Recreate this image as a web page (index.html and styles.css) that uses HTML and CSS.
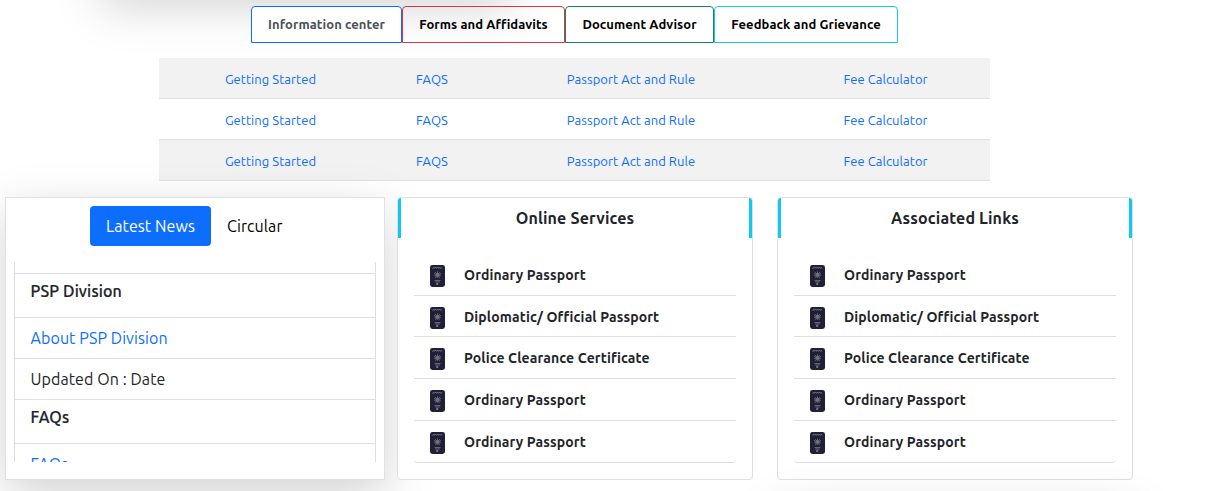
FILE: index.html
```html
<!DOCTYPE html>
<html lang="en">
<head>
<meta charset="utf-8">
<title>Passport Services</title>
<link rel="stylesheet" href="styles.css">
</head>
<body>
<svg class="defs" width="0" height="0" aria-hidden="true">
  <symbol id="passport" viewBox="0 0 15 22">
    <rect width="15" height="22" rx="2.4" fill="#211f38"/>
    <path d="M2.4 3.4h.8V2.4h1v.6h.9v-.5h1v.6h.9v-.6h1v.6h.9v-.6h1v.6h.9v-.5h1v.8" stroke="#77777f" stroke-width=".8" fill="none"/>
    <path d="M4.2 8l2 3M10.8 8l-2 3M7.5 6.3v6.5M5.3 7l1.5 3M9.7 7l-1.5 3M4.2 10.5l2.4 1M10.8 10.5l-2.4 1M5.2 12.8l1.5-1M9.8 12.8l-1.5-1" stroke="#62656c" stroke-width=".9"/>
    <circle cx="7.5" cy="9.8" r="2" fill="#6f7178"/>
    <path d="M4.5 15.6h6M5.3 17h4.4" stroke="#6c6a75" stroke-width="1"/>
    <rect x="6.2" y="18.2" width="2" height="1.6" fill="#85848d"/>
  </symbol>
</svg>
<div class="page">
  <div class="shade shade-top"></div>
  <nav class="tabs">
    <a class="tab tab-info"><span>Information center</span></a>
    <a class="tab tab-forms"><span>Forms and Affidavits</span></a>
    <a class="tab tab-doc"><span>Document Advisor</span></a>
    <a class="tab tab-feed"><span>Feedback and Grievance</span></a>
  </nav>
  <div class="links">
    <div class="link-row"><a>Getting Started</a><a>FAQS</a><a>Passport Act and Rule</a><a>Fee Calculator</a></div>
    <div class="link-row"><a>Getting Started</a><a>FAQS</a><a>Passport Act and Rule</a><a>Fee Calculator</a></div>
    <div class="link-row"><a>Getting Started</a><a>FAQS</a><a>Passport Act and Rule</a><a>Fee Calculator</a></div>
  </div>
  <main class="panels">
    <section class="news">
      <div class="pills"><a class="pill active">Latest News</a><a class="pill circular">Circular</a></div>
      <div class="feed">
        <div class="feed-row stub"></div>
        <div class="feed-row head"><b>PSP Division</b></div>
        <div class="feed-row"><a>About PSP Division</a></div>
        <div class="feed-row"><span>Updated On : Date</span></div>
        <div class="feed-row head"><b>FAQs</b></div>
        <div class="feed-row"><a>FAQs</a></div>
      </div>
    </section>
    <section class="card">
      <h2 class="card-title">Online Services</h2>
      <ul class="list">
        <li><svg class="icon"><use href="#passport"/></svg><span>Ordinary Passport</span></li>
        <li><svg class="icon"><use href="#passport"/></svg><span>Diplomatic/ Official Passport</span></li>
        <li><svg class="icon"><use href="#passport"/></svg><span>Police Clearance Certificate</span></li>
        <li><svg class="icon"><use href="#passport"/></svg><span>Ordinary Passport</span></li>
        <li><svg class="icon"><use href="#passport"/></svg><span>Ordinary Passport</span></li>
      </ul>
    </section>
    <section class="card">
      <h2 class="card-title">Associated Links</h2>
      <ul class="list">
        <li><svg class="icon"><use href="#passport"/></svg><span>Ordinary Passport</span></li>
        <li><svg class="icon"><use href="#passport"/></svg><span>Diplomatic/ Official Passport</span></li>
        <li><svg class="icon"><use href="#passport"/></svg><span>Police Clearance Certificate</span></li>
        <li><svg class="icon"><use href="#passport"/></svg><span>Ordinary Passport</span></li>
        <li><svg class="icon"><use href="#passport"/></svg><span>Ordinary Passport</span></li>
      </ul>
    </section>
  </main>
  <div class="shade shade-bottom"></div>
</div>
</body>
</html>
```

FILE: styles.css
```css
* { box-sizing: border-box; }
body { margin: 0; background: #fff; color: #212529; font: 400 16px/24px Ubuntu, "Noto Sans", sans-serif; letter-spacing: .09px; }
.defs { position: absolute; }
.page { position: relative; width: 1215px; height: 491px; overflow: hidden; padding-top: 6px; }
.shade { position: absolute; height: 100px; box-shadow: 0 16px 48px rgba(0,0,0,.175); pointer-events: none; }
.shade-top { left: 100px; top: -110px; width: 412px; }
.shade-bottom { left: 777px; top: 496px; width: 356px; }

.tabs { position: relative; display: flex; margin-left: 251px; height: 37px; }
.tab { display: flex; justify-content: center; padding-top: 5px; border: 1px solid; border-radius: 4px 4px 0 0; font-size: 13px; font-weight: 700; letter-spacing: .08px; white-space: nowrap; }
.tab span { color: #000; }
.tab-info { width: 151px; border-color: #0d6efd; background: #fff; }
.tab-info span { color: #495057; }
.tab-forms { width: 163px; border-color: #dc3545; }
.tab-doc { width: 149px; border-color: #198754; }
.tab-feed { width: 184px; border-color: #0dcaf0; }

.links { width: 831px; margin: 15px 0 0 159px; }
.link-row { display: grid; grid-template-columns: 223px 100px 298px 211px; height: 41px; padding-top: 9px; justify-items: center; border-bottom: 1px solid #dee2e6; color: #0d6efd; font-size: 13px; letter-spacing: .05px; }
.link-row:nth-child(odd) { background: #f2f2f2; }

.panels { position: relative; display: flex; align-items: flex-start; margin: 16px 0 0 5px; }
.news { width: 380px; height: 283px; margin-right: 12px; padding: 8px; border: 1px solid #dee2e6; background: #fff; box-shadow: 0 16px 48px rgba(0,0,0,.175); }
.pills { display: flex; justify-content: center; height: 40px; margin-bottom: 16px; }
.pill { padding: 8px 16px; border-radius: 4px; color: #000; white-space: nowrap; }
.active { width: 121px; background: #0d6efd; color: #fff; }
.circular { width: 89px; }
.feed { height: 200px; overflow: hidden; }
.feed-row { height: 41px; padding: 8px 15.5px; border: solid #dedfe0; border-width: 0 1px 1px; }
.feed-row a { color: #0d6efd; }
.stub { height: 12px; padding: 0; }
.head { height: 44px; padding-top: 5px; }
.head b { font-weight: 500; letter-spacing: .14px; -webkit-text-stroke: .2px; }

.card { position: relative; width: 356px; height: 283px; margin-right: 24px; border: 1px solid #dfdfdf; border-radius: 4px; background: #fff; }
.card-title { height: 40px; margin: 0; padding-top: 8px; border: solid #0dcaf0; border-width: 0 3px; border-radius: 3px 3px 0 0; font-size: 16px; line-height: 24px; font-weight: 700; letter-spacing: .15px; text-align: center; }
.list { margin: 16px 16px 0; padding: 0; list-style: none; }
.list li { display: flex; align-items: flex-start; height: 42px; padding: 9px 16px 0; border-bottom: 1px solid #dfdfdf; font-size: 14px; font-weight: 700; letter-spacing: .13px; white-space: nowrap; }
.list li:nth-child(2) { height: 41px; }
.list li:last-child { border-radius: 0 0 4px 4px; }
.icon { width: 15px; height: 22px; margin: 2px 19px 0 0; flex: none; }
```
